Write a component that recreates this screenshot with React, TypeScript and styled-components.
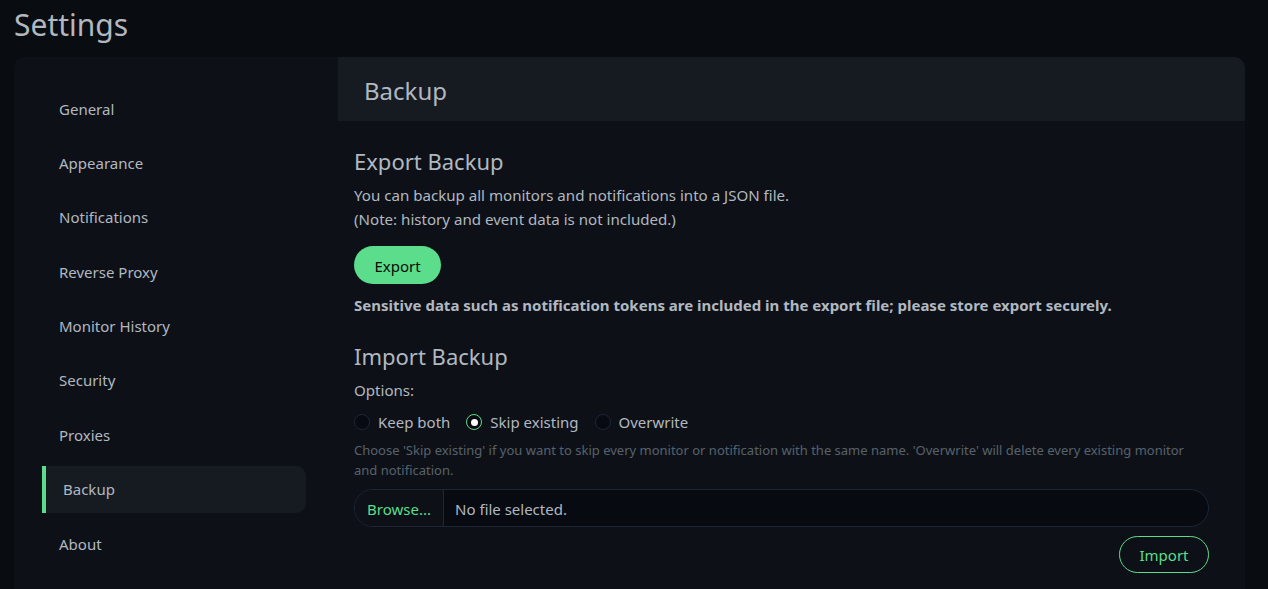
import styled, { createGlobalStyle } from "styled-components"

const GlobalStyle = createGlobalStyle`
  html, body {
    margin: 0;
    padding: 0;
    background: #090c10;
    color: #b1b8c0;
    font-family: "Segoe UI", "Noto Sans", sans-serif;
    font-size: 16px;
    height: 100%;
    overflow: hidden;
  }
  * { box-sizing: border-box; }
`

const Page = styled.div`
  height: 589px;
  padding: 0 23px 0 14px;
  display: flex;
  flex-direction: column;
`

const Title = styled.h1`
  margin: 0;
  font-size: 30px;
  font-weight: 400;
  line-height: 50px;
  height: 57px;
  color: #b1b8c0;
`

const Card = styled.div`
  flex: 1;
  display: flex;
  background: #0d1117;
  border-radius: 10px 10px 0 0;
  overflow: hidden;
`

const Menu = styled.nav`
  width: 324px;
  flex-shrink: 0;
  padding: 28px 32px 0 28px;
  display: flex;
  flex-direction: column;
  gap: 7.4px;
`

const MenuItem = styled.div<{ $active?: boolean }>`
  height: 47px;
  display: flex;
  align-items: center;
  padding-left: 17px;
  font-size: 15px;
  color: #b1b8c0;
  border-radius: ${(p) => (p.$active ? "0 10px 10px 0" : "10px")};
  background: ${(p) => (p.$active ? "#161b22" : "transparent")};
  border-left: ${(p) => (p.$active ? "4px solid #5cdd8b" : "none")};
`

const Panel = styled.section`
  flex: 1;
  display: flex;
  flex-direction: column;
`

const PanelHeader = styled.div`
  height: 64px;
  background: #161b22;
  border-top-right-radius: 10px;
  display: flex;
  align-items: center;
  padding: 2px 0 0 26px;
  font-size: 24px;
`

const Body = styled.div`
  padding: 26px 36px 0 16px;
  display: flex;
  flex-direction: column;
`

const Heading = styled.h4<{ $top?: number }>`
  margin: ${(p) => p.$top ?? 0}px 0 0;
  font-size: 22px;
  font-weight: 400;
  line-height: 29px;
`

const Text = styled.p<{ $top?: number }>`
  margin: ${(p) => p.$top ?? 0}px 0 0;
  font-size: 15.1px;
  line-height: 24px;
`

const Strong = styled(Text)`
  font-weight: 700;
  font-size: 15px;
`

const ExportButton = styled.button`
  margin-top: 15px;
  align-self: flex-start;
  height: 38px;
  width: 87px;
  border: none;
  border-radius: 28px;
  background: #5cdd8b;
  color: #020b05;
  font-family: inherit;
  font-size: 15px;
  padding-top: 2px;
`

const RadioRow = styled.div`
  margin-top: 8px;
  height: 24px;
  display: flex;
  align-items: center;
  gap: 16px;
`

const RadioLabel = styled.label`
  display: flex;
  align-items: center;
  gap: 8px;
  font-size: 15px;
`

const RadioMark = styled.span<{ $checked?: boolean }>`
  width: 16px;
  height: 16px;
  border-radius: 50%;
  background: #070a10;
  border: 1.5px solid ${(p) => (p.$checked ? "#5cdd8b" : "#1d2634")};
  display: flex;
  align-items: center;
  justify-content: center;
  &::after {
    content: "";
    display: ${(p) => (p.$checked ? "block" : "none")};
    width: 7px;
    height: 7px;
    border-radius: 50%;
    background: #fff;
  }
`

const Help = styled.div`
  margin-top: 6px;
  font-size: 13px;
  line-height: 20px;
  color: #58616b;
`

const FileInput = styled.div`
  margin-top: 9px;
  height: 38px;
  display: flex;
  border: 1px solid #1d2634;
  border-radius: 28px;
  background: #070a10;
  overflow: hidden;
`

const Browse = styled.div`
  width: 89px;
  display: flex;
  align-items: center;
  justify-content: center;
  padding-top: 2px;
  background: #0d1117;
  border-right: 1px solid #1d2634;
  color: #5cdd8b;
  font-size: 15px;
`

const FileName = styled.div`
  display: flex;
  align-items: center;
  padding: 2px 0 0 11px;
  font-size: 15px;
`

const ImportButton = styled.button`
  margin-top: 9px;
  align-self: flex-end;
  height: 37px;
  width: 90px;
  border: 1px solid #5cdd8b;
  border-radius: 28px;
  background: transparent;
  color: #5cdd8b;
  font-family: inherit;
  font-size: 15px;
  padding-top: 2px;
`

const menu = [
  "General",
  "Appearance",
  "Notifications",
  "Reverse Proxy",
  "Monitor History",
  "Security",
  "Proxies",
  "Backup",
  "About",
]

export default function App() {
  return (
    <>
      <GlobalStyle />
      <Page>
        <Title>Settings</Title>
        <Card>
          <Menu>
            {menu.map((m) => (
              <MenuItem key={m} $active={m === "Backup"}>
                {m}
              </MenuItem>
            ))}
          </Menu>
          <Panel>
            <PanelHeader>Backup</PanelHeader>
            <Body>
              <Heading>Export Backup</Heading>
              <Text $top={7}>
                You can backup all monitors and notifications into a JSON file.
                <br />
                (Note: history and event data is not included.)
              </Text>
              <ExportButton>Export</ExportButton>
              <Strong $top={9}>
                Sensitive data such as notification tokens are included in the export file; please store export securely.
              </Strong>

              <Heading $top={25}>Import Backup</Heading>
              <Text $top={7}>Options:</Text>
              <RadioRow>
                <RadioLabel>
                  <RadioMark />
                  Keep both
                </RadioLabel>
                <RadioLabel>
                  <RadioMark $checked />
                  Skip existing
                </RadioLabel>
                <RadioLabel>
                  <RadioMark />
                  Overwrite
                </RadioLabel>
              </RadioRow>
              <Help>
                Choose 'Skip existing' if you want to skip every monitor or notification with the same name. 'Overwrite' will delete every existing monitor and notification.
              </Help>
              <FileInput>
                <Browse>Browse...</Browse>
                <FileName>No file selected.</FileName>
              </FileInput>
              <ImportButton>Import</ImportButton>
            </Body>
          </Panel>
        </Card>
      </Page>
    </>
  )
}
